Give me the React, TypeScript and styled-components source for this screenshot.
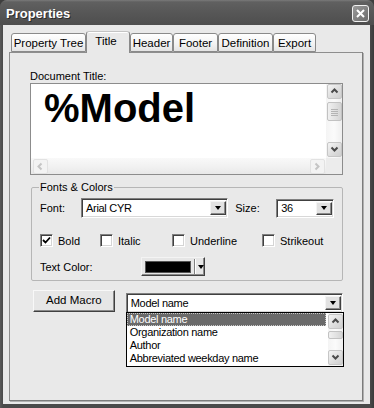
import * as React from 'react';
import styled, { createGlobalStyle } from 'styled-components';

const GlobalStyle = createGlobalStyle`
  html, body { margin: 0; padding: 0; background: #3e3e3e; }
  body {
    font-family: "Liberation Sans", Arial, sans-serif;
    font-size: 11px;
    color: #000;
  }
`;

const Window = styled.div`
  width: 374px;
  height: 408px;
  box-sizing: border-box;
  display: flex;
  flex-direction: column;
  background: linear-gradient(90deg, #5a5a5a 0, #4a4a4a 3px, #4a4a4a 370px, #3a3a3a);
  border-radius: 7px 7px 0 0;
  overflow: hidden;
`;

const TitleBar = styled.div`
  height: 25px;
  flex: none;
  display: flex;
  align-items: center;
  justify-content: space-between;
  padding: 0 5px 0 6px;
  background: linear-gradient(#7a7a7a 0, #606060 2px, #575757 50%, #4e4e4e 100%);
`;

const Caption = styled.span`
  color: #fff;
  font-weight: bold;
  font-size: 13px;
  text-shadow: 1px 1px 0 #2c2c2c;
  margin-top: 1px;
`;

const CloseButton = styled.div`
  width: 15px;
  height: 15px;
  border: 1px solid #f2f2f2;
  border-radius: 3px;
  background: linear-gradient(135deg, #9a9a9a, #6c6c6c);
  display: flex;
  align-items: center;
  justify-content: center;
  margin-top: 1px;
`;

const Body = styled.div`
  flex: 1;
  margin: 0 4px 4px 3px;
  padding: 6px 7px 3px 6px;
  background: #e9e9e9;
  display: flex;
  flex-direction: column;
`;

const TabRow = styled.div`
  height: 21px;
  display: flex;
  align-items: flex-end;
  padding-left: 2px;
  position: relative;
  z-index: 1;
`;

const Tab = styled.div<{ $w: number; $active?: boolean }>`
  width: ${(p) => p.$w}px;
  box-sizing: border-box;
  height: ${(p) => (p.$active ? 22 : 19)}px;
  margin-bottom: ${(p) => (p.$active ? -1 : 0)}px;
  border: 1px solid #8a8a8a;
  border-bottom: ${(p) => (p.$active ? 'none' : '1px solid #8a8a8a')};
  border-top-color: ${(p) => (p.$active ? '#c4c4c4' : '#8a8a8a')};
  border-radius: 3px 3px 0 0;
  background: ${(p) =>
    p.$active ? '#e9e9e9' : 'linear-gradient(#ffffff, #f2f2f2 60%, #e4e4e4)'};
  box-shadow: ${(p) => (p.$active ? 'inset 0 1px 0 #ffffff' : 'none')};
  display: flex;
  align-items: center;
  justify-content: center;
  padding-bottom: ${(p) => (p.$active ? 4 : 0)}px;
  padding-right: ${(p) => (p.$active ? 4 : 0)}px;
  white-space: nowrap;
  font-size: 11.5px;
`;

const Panel = styled.div`
  flex: 1;
  border: 1px solid #8e8e8e;
  border-right-color: #7c7c7c;
  border-bottom-color: #7c7c7c;
  box-shadow: 1px 1px 0 #b0b0b0;
  padding: 17px 19px 0 20px;
  display: flex;
  flex-direction: column;
`;

const Label = styled.div`
  line-height: 13px;
  height: 13px;
  white-space: nowrap;
`;

const TextBox = styled.div`
  height: 92px;
  box-sizing: border-box;
  border: 1px solid #8c8c8c;
  background: #fff;
  display: grid;
  grid-template-columns: 1fr 16px;
  grid-template-rows: 1fr 16px;
`;

const BigText = styled.div`
  font-size: 40px;
  line-height: 40px;
  font-weight: bold;
  padding: 4px 0 0 13px;
`;

const VScroll = styled.div<{ $thumb: number; $thumbH: number }>`
  display: flex;
  flex-direction: column;
  background: linear-gradient(90deg, #f4f4f4, #fbfbfb 50%, #efefef);
  padding: 0 0 1px 1px;
  .thumb {
    margin-top: ${(p) => p.$thumb}px;
    height: ${(p) => p.$thumbH}px;
  }
  .spacer { flex: 1; }
`;

const HScroll = styled.div`
  display: flex;
  align-items: center;
  background: linear-gradient(#f9f9f9, #f0f0f0 60%, #e8e8e8);
  padding: 0 1px 0 2px;
  .spacer { flex: 1; }
`;

const Corner = styled.div`
  background: #ececec;
`;

const ScrollBtn = styled.div<{ $disabled?: boolean }>`
  width: 15px;
  height: 15px;
  box-sizing: border-box;
  border: 1px solid ${(p) => (p.$disabled ? '#e2e2e2' : '#c6c6c6')};
  border-radius: 2px;
  background: ${(p) =>
    p.$disabled ? '#f3f3f3' : 'linear-gradient(135deg, #f4f4f4, #dcdcdc 60%, #cfcfcf)'};
  display: flex;
  align-items: center;
  justify-content: center;
  flex: none;
`;

const Thumb = styled.div`
  width: 15px;
  box-sizing: border-box;
  border: 1px solid #c2c2c2;
  border-radius: 2px;
  background: linear-gradient(90deg, #f0f0f0, #e0e0e0 60%, #d4d4d4);
  display: flex;
  align-items: center;
  justify-content: center;
`;

const Group = styled.fieldset`
  margin: 6px 0 0 1px;
  padding: 0 8px 4px 8px;
  border: 1px solid #b6b6b6;
  border-radius: 2px;
  min-width: 0;
  legend {
    padding: 0 1px;
    margin-left: -1px;
    line-height: 13px;
    font-size: 11px;
  }
`;

const FontRow = styled.div`
  display: flex;
  align-items: center;
  margin-top: 4px;
`;

const FieldLabel = styled.span<{ $w: number; $gap?: number }>`
  width: ${(p) => p.$w}px;
  margin-left: ${(p) => p.$gap ?? 0}px;
  flex: none;
`;

const Combo = styled.div<{ $w: number; $h?: number }>`
  width: ${(p) => p.$w}px;
  height: ${(p) => p.$h ?? 20}px;
  box-sizing: border-box;
  border: 1px solid;
  border-color: #808080 #ffffff #ffffff #808080;
  box-shadow: inset 1px 1px 0 #404040, inset -1px -1px 0 #d8d8d8;
  background: #fff;
  display: flex;
  align-items: center;
  padding: 0 1px 0 4px;
  letter-spacing: -0.3px;
  position: relative;
  .value { flex: 1; white-space: nowrap; }
`;

const DropBtn = styled.div`
  width: 16px;
  height: calc(100% - 4px);
  box-sizing: border-box;
  border: 1px solid;
  border-color: #f4f4f4 #404040 #404040 #f4f4f4;
  box-shadow: inset -1px -1px 0 #8a8a8a;
  background: #e2e2e2;
  display: flex;
  align-items: center;
  justify-content: center;
  flex: none;
`;

const Triangle = styled.span`
  width: 0;
  height: 0;
  border-left: 3.5px solid transparent;
  border-right: 3.5px solid transparent;
  border-top: 4px solid #000;
`;

const CheckRow = styled.div`
  display: grid;
  grid-template-columns: 60px 72px 90px auto;
  margin-top: 16px;
  height: 13px;
  align-items: center;
`;

const CheckItem = styled.label`
  display: flex;
  align-items: center;
  gap: 5px;
  white-space: nowrap;
`;

const Box = styled.span`
  width: 13px;
  height: 13px;
  box-sizing: border-box;
  border: 1px solid;
  border-color: #808080 #ffffff #ffffff #808080;
  box-shadow: inset 1px 1px 0 #404040, inset -1px -1px 0 #d4d4d4;
  background: #fff;
  display: flex;
  align-items: center;
  justify-content: center;
  flex: none;
`;

const ColorRow = styled.div`
  display: flex;
  align-items: center;
  margin-top: 10px;
`;

const ColorButton = styled.div`
  width: 64px;
  height: 19px;
  box-sizing: border-box;
  border: 1px solid;
  border-color: #f4f4f4 #404040 #404040 #f4f4f4;
  box-shadow: inset -1px -1px 0 #8a8a8a;
  background: #e6e6e6;
  display: flex;
  align-items: center;
  padding: 0 0 0 3px;
  .swatch {
    width: 47px;
    height: 12px;
    background: #000;
    border: 1px solid #555;
    box-sizing: border-box;
  }
  .sep {
    width: 1px;
    height: 15px;
    background: #808080;
    box-shadow: 1px 0 0 #fff;
    margin: 0 3px 0 3px;
  }
`;

const MacroRow = styled.div`
  display: flex;
  align-items: flex-start;
  margin: 9px 0 0 3px;
`;

const PushButton = styled.div`
  width: 82px;
  height: 22px;
  box-sizing: border-box;
  border: 1px solid;
  border-color: #f8f8f8 #404040 #404040 #f8f8f8;
  box-shadow: inset -1px -1px 0 #8a8a8a;
  background: #e6e6e6;
  display: flex;
  align-items: center;
  justify-content: center;
  font-size: 11.5px;
  padding-bottom: 2px;
`;

const MacroCombo = styled(Combo)`
  margin: 3px 0 0 11px;
`;

const DropList = styled.div`
  position: absolute;
  top: 100%;
  left: -1px;
  width: 218px;
  height: 55px;
  box-sizing: border-box;
  border: 1px solid #000;
  background: #fff;
  display: flex;
  z-index: 2;
`;

const Items = styled.div`
  flex: 1;
`;

const Item = styled.div<{ $selected?: boolean }>`
  height: 13px;
  line-height: 13px;
  padding-left: 3px;
  margin-right: 2px;
  white-space: nowrap;
  background: ${(p) => (p.$selected ? '#6a6a6a' : 'transparent')};
  color: ${(p) => (p.$selected ? '#fff' : '#000')};
  outline: ${(p) => (p.$selected ? '1px dotted #c8c8c8' : 'none')};
  outline-offset: -1px;
`;

const ListScroll = styled(VScroll)`
  width: 15px;
  padding: 1px 0 1px 0;
`;

const Chevron = ({ dir, light }: { dir: 'up' | 'down' | 'left' | 'right'; light?: boolean }) => {
  const d = {
    up: 'M2.5 6.5 L5.5 3.5 L8.5 6.5',
    down: 'M2.5 3.5 L5.5 6.5 L8.5 3.5',
    left: 'M6.5 2.5 L3.5 5.5 L6.5 8.5',
    right: 'M3.5 2.5 L6.5 5.5 L3.5 8.5',
  }[dir];
  return (
    <svg width="11" height="11" viewBox="0 0 11 11">
      <path d={d} fill="none" stroke={light ? '#c4c4c4' : '#4a4a4a'} strokeWidth="2" />
    </svg>
  );
};

const Grip = () => (
  <svg width="7" height="8" viewBox="0 0 7 8">
    <path d="M0 1.5h7M0 3.5h7M0 5.5h7M0 7.5h7" stroke="#b4b4b4" strokeWidth="1" />
  </svg>
);

const tabs: [string, number][] = [
  ['Property Tree', 75],
  ['Title', 44],
  ['Header', 43],
  ['Footer', 45],
  ['Definition', 55],
  ['Export', 43],
];

const macros = ['Model name', 'Organization name', 'Author', 'Abbreviated weekday name'];

export default function App() {
  return (
    <>
      <GlobalStyle />
      <Window>
        <TitleBar>
          <Caption>Properties</Caption>
          <CloseButton>
            <svg width="9" height="9" viewBox="0 0 9 9">
              <path d="M1 1 L8 8 M8 1 L1 8" stroke="#fff" strokeWidth="2" />
            </svg>
          </CloseButton>
        </TitleBar>
        <Body>
          <TabRow>
            {tabs.map(([name, w]) => (
              <Tab key={name} $w={w} $active={name === 'Title'}>
                {name}
              </Tab>
            ))}
          </TabRow>
          <Panel>
            <Label>Document Title:</Label>
            <TextBox>
              <BigText>%Model</BigText>
              <VScroll $thumb={3} $thumbH={19}>
                <ScrollBtn>
                  <Chevron dir="up" />
                </ScrollBtn>
                <Thumb className="thumb">
                  <Grip />
                </Thumb>
                <div className="spacer" />
                <ScrollBtn>
                  <Chevron dir="down" />
                </ScrollBtn>
              </VScroll>
              <HScroll>
                <ScrollBtn $disabled>
                  <Chevron dir="left" light />
                </ScrollBtn>
                <div className="spacer" />
                <ScrollBtn $disabled>
                  <Chevron dir="right" light />
                </ScrollBtn>
              </HScroll>
              <Corner />
            </TextBox>

            <Group>
              <legend>Fonts &amp; Colors</legend>
              <FontRow>
                <FieldLabel $w={41}>Font:</FieldLabel>
                <Combo $w={148}>
                  <span className="value">Arial CYR</span>
                  <DropBtn>
                    <Triangle />
                  </DropBtn>
                </Combo>
                <FieldLabel $w={41} $gap={7}>
                  Size:
                </FieldLabel>
                <Combo $w={58} $h={19}>
                  <span className="value">36</span>
                  <DropBtn>
                    <Triangle />
                  </DropBtn>
                </Combo>
              </FontRow>
              <CheckRow>
                {['Bold', 'Italic', 'Underline', 'Strikeout'].map((name) => (
                  <CheckItem key={name}>
                    <Box>
                      {name === 'Bold' && (
                        <svg width="9" height="9" viewBox="0 0 9 9">
                          <path d="M1 4 L3.5 6.5 L8 1.5" fill="none" stroke="#000" strokeWidth="1.8" />
                        </svg>
                      )}
                    </Box>
                    {name}
                  </CheckItem>
                ))}
              </CheckRow>
              <ColorRow>
                <FieldLabel $w={101}>Text Color:</FieldLabel>
                <ColorButton>
                  <span className="swatch" />
                  <span className="sep" />
                  <Triangle />
                </ColorButton>
              </ColorRow>
            </Group>

            <MacroRow>
              <PushButton>Add Macro</PushButton>
              <MacroCombo $w={218} $h={20}>
                <span className="value">Model name</span>
                <DropBtn>
                  <Triangle />
                </DropBtn>
                <DropList>
                  <Items>
                    {macros.map((m, i) => (
                      <Item key={m} $selected={i === 0}>
                        {m}
                      </Item>
                    ))}
                  </Items>
                  <ListScroll $thumb={2} $thumbH={8}>
                    <ScrollBtn>
                      <Chevron dir="up" />
                    </ScrollBtn>
                    <Thumb className="thumb" />
                    <div className="spacer" />
                    <ScrollBtn>
                      <Chevron dir="down" />
                    </ScrollBtn>
                  </ListScroll>
                </DropList>
              </MacroCombo>
            </MacroRow>
          </Panel>
        </Body>
      </Window>
    </>
  );
}
